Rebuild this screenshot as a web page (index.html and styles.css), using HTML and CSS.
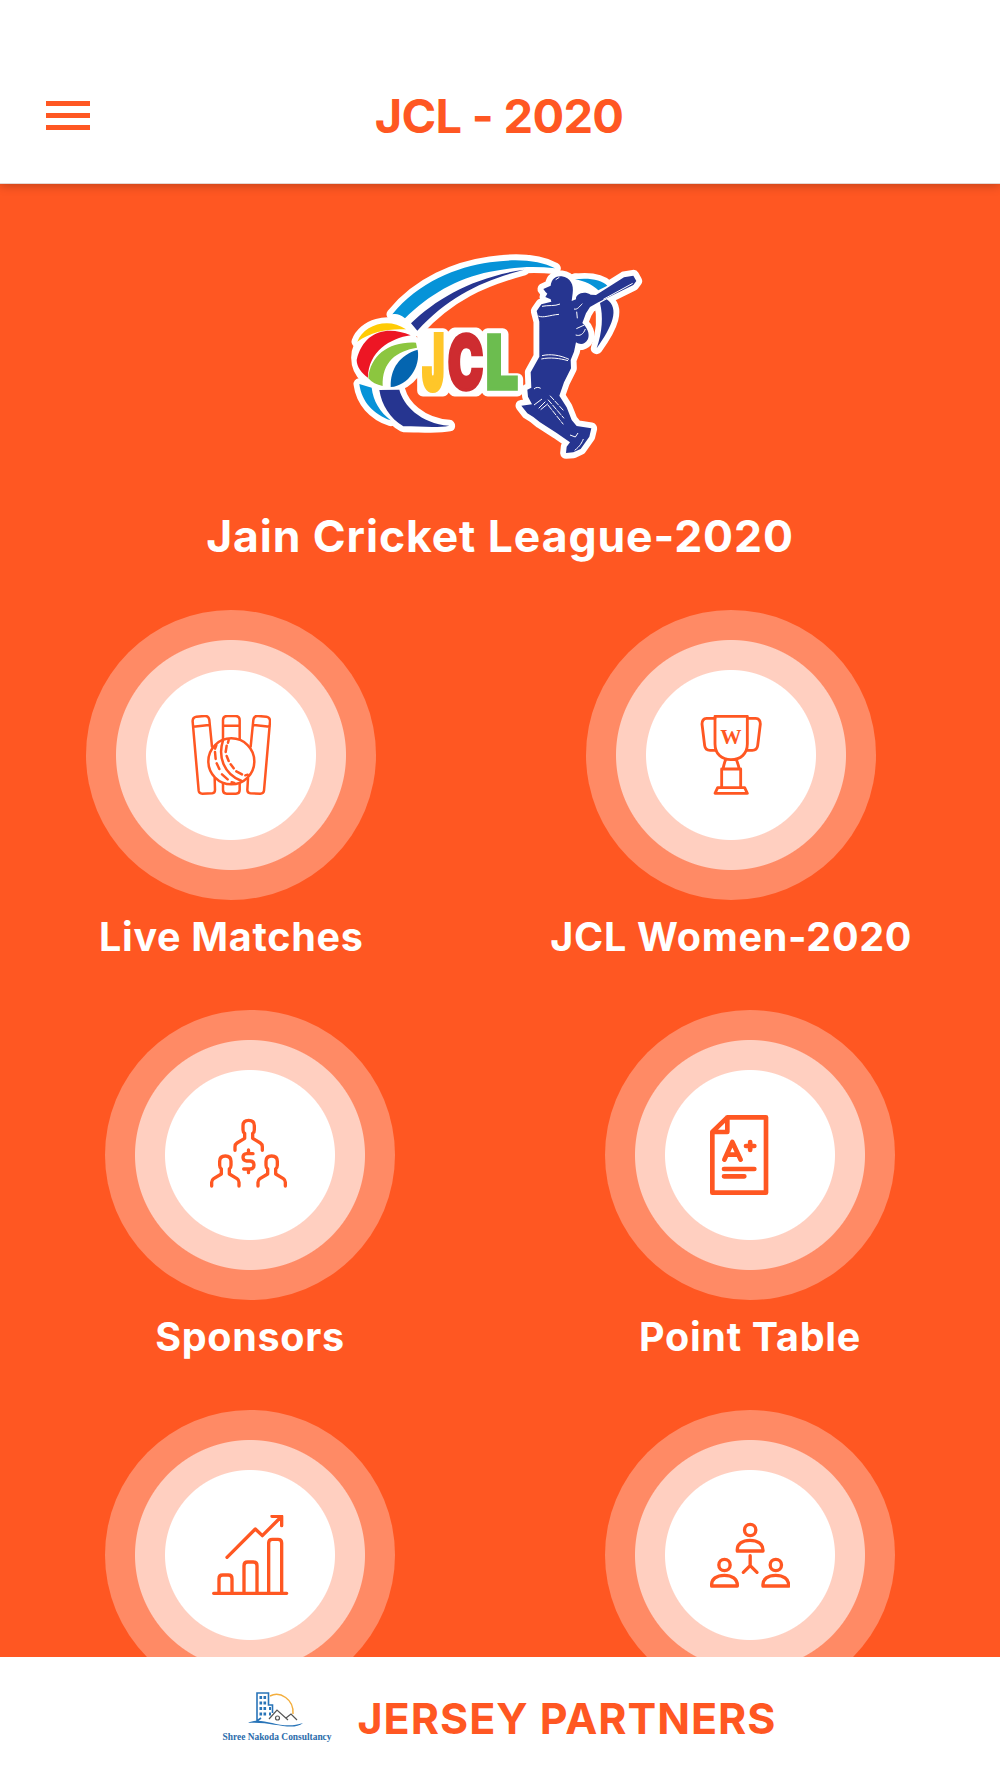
FILE: index.html
```
<!DOCTYPE html>
<html lang="en">

<head>
  <meta charset="UTF-8">
  <title>JCL - 2020</title>
  <link rel="stylesheet" href="styles.css">
</head>

<body>

  <header class="topbar">
    <button class="menu-btn" aria-label="Menu">
      <span></span>
      <span></span>
      <span></span>
    </button>
    <h1>JCL - 2020</h1>
  </header>

  <main>
    <svg class="logo" viewBox="0 0 960 660">
      <defs>
        <g id="swoosh">
          <path fill="#0693d8" d="M157 208C235 112 350 66 450 52C530 40 600 46 645 70C580 62 520 66 450 80C350 100 265 150 195 220C180 208 170 206 157 208Z" />
          <path fill="#263590" d="M213 235C290 160 400 97 552 74C430 107 330 150 232 257Z" />
          <path fill="#0693d8" d="M58 417L95 428C100 470 120 500 152 526C100 508 65 470 58 417Z" />
          <path fill="#263590" d="M118 435L178 434C190 480 240 535 328 542C290 550 240 544 190 544C150 520 125 480 118 435Z" />
        </g>
        <g id="ball">
          <path fill="#ffcb05" d="M52 290C70 240 145 215 198 253C150 250 95 258 52 290Z" />
          <path fill="#ed1624" d="M212 271C150 280 85 320 84 398C65 385 50 365 50 345C70 260 140 240 212 271Z" />
          <path fill="#8cc63f" d="M85 400C90 330 150 288 228 293L231 308C170 318 125 350 128 423C110 420 95 412 85 400Z" />
          <path fill="#0465b0" d="M152 426C150 370 180 330 233 314C242 365 205 422 152 426Z" />
        </g>
        <g id="letters" class="letters">
          <text x="248" y="432" textLength="63" lengthAdjust="spacingAndGlyphs" fill="#ffc629" stroke="#ffc629" stroke-width="18">J</text>
          <text x="323" y="432" textLength="107" lengthAdjust="spacingAndGlyphs" fill="#ce2c30" stroke="#ce2c30" stroke-width="10">C</text>
          <text x="437" y="432" textLength="97" lengthAdjust="spacingAndGlyphs" fill="#6cbd4f" stroke="#6cbd4f" stroke-width="10">L</text>
        </g>
        <g id="batsman">
          <path fill="#0693d8" d="M705 103C750 98 785 105 802 122L775 136C757 119 735 109 705 103Z" />
          <path fill="#263590" d="M780 174L800 163C840 190 817 245 770 310C787 260 790 215 780 174Z" />
          <path fill="#263590" d="M610 132L632 122C634 100 650 92 665 94C692 98 702 120 698 145L695 168L708 163C706 148 730 136 752 149L768 150L852 97L880 92L889 108L880 120L775 172L750 186L738 205L727 234C742 248 750 266 744 282C735 300 720 300 708 292L702 320L692 345L693 370L672 412L658 452L680 487L695 525L710 543L754 550L748 575L722 612L700 622L678 624L680 605L690 592L650 564L600 532L580 516L562 505L544 482L576 478L564 455L562 434L574 428L572 382L598 335L598 230L590 198L604 178L634 170L632 163L616 156L622 146L616 140Z" />
        </g>
      </defs>
      <g class="outline">
        <use href="#swoosh" />
        <use href="#batsman" />
        <ellipse cx="143" cy="338" rx="92" ry="86" />
        <path d="M52 290C70 240 145 215 198 253Z" />
        <path d="M249 267h60v170h-60zM324 285l20-20h65l20 20v130l-20 22h-65l-20-22zM443 267h45v135h44v35h-89z" />
        <path d="M690 110L705 103L802 122L770 150L700 165Z" />
      </g>
      <use href="#swoosh" />
      <use href="#ball" />
      <use href="#letters" />
      <use href="#batsman" />
      <g class="details">
        <path d="M606 332C630 326 660 330 687 343M604 342C630 336 660 340 684 347" />
        <path d="M606 184C625 180 645 184 660 177M595 213C610 220 630 210 657 208" />
        <path d="M582 480L606 462M596 490L616 470M602 494L624 476M582 432C588 426 595 426 602 430" />
        <path d="M630 452L670 496M624 464L672 520M624 480L670 538" stroke-dasharray="18 3" />
        <path d="M702 192C712 195 718 185 727 176M710 200L712 220M709 251L733 240M707 270C720 274 730 268 736 252" />
        <path d="M690 570L706 576L714 564M704 616C720 604 726 592 730 582M790 163L878 115M647 104L658 97" />
      </g>
    </svg>

    <h2>Jain Cricket League-2020</h2>

    <div class="menu">
      <a class="item shifted">
        <div class="circle">
          <svg class="icon" viewBox="334 345 240 240" stroke-width="7.500">
            <path d="M397 440L389 360Q387 347 375 348L350 350Q338 352 339 365L357 572Q358 581 368 581L398 580Q406 579 406 570L405 535M341 380L388 375" />
            <path d="M430 418V361Q430 348 443 348H467Q480 348 480 361V418M430 377H480M430 550V570Q430 581 441 581H469Q480 581 480 570V550" />
            <path d="M513 440L521 360Q523 347 535 348L560 350Q572 352 571 365L553 572Q552 581 542 581L512 580Q503 579 503 570L505 535M523 375L570 380" />
            <circle cx="455" cy="484" r="69" />
            <path d="M430 421C414 470 432 522 486 543" />
            <path d="M447 420L445 428M441 437L438 456M441 468L447 483M453 493L462 505M470 514L487 523M497 526L504 524M410 436L406 446M406 456L408 477M411 490L419 507M427 523L444 538M456 547L464 549" />
          </svg>
        </div>
        <span class="label">Live Matches</span>
      </a>

      <a class="item shifted">
        <div class="circle">
          <svg class="icon" viewBox="124 105 240 240" stroke-width="8.500">
            <path d="M196 109H293V192C293 222 272 239 244 239S196 222 196 192Z" />
            <path d="M196 115H171Q157 116 157 132L165 197Q167 211 181 211H199M293 115H318Q332 116 332 132L324 197Q322 211 308 211H290" />
            <path d="M228 239Q223 251 220 267M260 239Q265 251 269 267M216 267H273V323H216ZM204 323H285L293 340H196Z" />
            <text class="cup-letter" x="212" y="192" textLength="64" lengthAdjust="spacingAndGlyphs">W</text>
          </svg>
        </div>
        <span class="label">JCL Women-2020</span>
      </a>

      <a class="item">
        <div class="circle">
          <svg class="icon" viewBox="120 75 240 240" stroke-width="10">
            <path id="person" d="M195 181V170Q195 163 201 159L224 145V130Q219 127 219 119V107Q219 91 236 91T253 107V119Q253 127 248 130V145L271 159Q277 163 277 170V181" />
            <use href="#person" x="-70" y="107" />
            <use href="#person" x="69" y="107" />
            <path d="M249 191H230Q219 192 219 202T230 213H241Q252 214 252 225T241 237H221M235.500 180V190M235.500 238V248" />
          </svg>
        </div>
        <span class="label">Sponsors</span>
      </a>

      <a class="item">
        <div class="circle">
          <svg class="icon" viewBox="120 75 240 240" stroke-width="14">
            <path d="M127 126L172 82H288V308H127ZM127 126H172V82" />
            <path d="M163 209L187 156L212 209M173 194H202M228 168H253M240.500 156V180M162 237H253M162 259H223" />
          </svg>
        </div>
        <span class="label">Point Table</span>
      </a>

      <a class="item">
        <div class="circle">
          <svg class="icon" viewBox="120 75 240 240" stroke-width="10">
            <path d="M131 310H350M147 308V266Q147 255 158 255H175Q186 255 186 266V308M222 308V227Q222 216 233 216H250Q261 216 261 227V308M296 308V159Q296 148 307 148H324Q335 148 335 159V308" />
            <path d="M171 202L256 117L277 137L333 81M306 79H335V107" />
          </svg>
        </div>
      </a>

      <a class="item">
        <div class="circle">
          <svg class="icon" viewBox="120 75 240 240" stroke-width="10">
            <g id="member">
              <circle cx="240.500" cy="120" r="17" />
              <path d="M202 183C200 161 218 151 240 151S280 161 279 183Z" />
            </g>
            <use href="#member" x="-77" y="105" />
            <use href="#member" x="77" y="105" />
            <path d="M240.500 197V227L220 247M240.500 227L261 247" />
          </svg>
        </div>
      </a>
    </div>
  </main>

  <footer class="partners">
    <svg class="sponsor" viewBox="0 0 112 56">
      <path d="M49 6C59 1 73 9 72 24" fill="none" stroke="#f3ae3d" stroke-width="1.500" />
      <path d="M36 31V3H47.500V15H51.500V23M36 31L40 28" fill="none" stroke="#2874b8" stroke-width="1.600" />
      <path d="M38.500 7.500H45.500M38.500 13H45.500M38.500 18.500H45.500M38.500 24H45.500M48 18.500H50M48 24H50" fill="none" stroke="#2874b8" stroke-width="2.800" stroke-dasharray="2.600 1.400" />
      <path d="M27 33C41 25 59 41 82 33C71 42 51 31 27 33Z" fill="#2874b8" />
      <path d="M48 29L56 20L67 30M65 28L70 24L76 30" fill="none" stroke="#555" stroke-width="1.200" />
      <circle cx="56.500" cy="28" r="2" fill="none" stroke="#555" stroke-width="1.200" />
      <text x="1.500" y="50" textLength="109" lengthAdjust="spacingAndGlyphs">Shree Nakoda Consultancy</text>
    </svg>
    <h3>JERSEY PARTNERS</h3>
  </footer>

</body>

</html>
```
FILE: styles.css
```
* {
  box-sizing: border-box;
}

body {
  margin: 0;
  height: 1778px;
  display: flex;
  flex-direction: column;
  overflow: hidden;
  background: #ff5722;
  font-family: Inter, "Liberation Sans", sans-serif;
}

h1,
h2,
h3 {
  margin: 0;
  white-space: nowrap;
}

.topbar {
  flex: none;
  height: 184px;
  padding: 48px 48px 0 46px;
  display: grid;
  grid-template-columns: 44px 1fr 44px;
  align-items: center;
  background: #fff;
  color: #ff5722;
  border-bottom: 1px solid #e4d8d4;
  box-shadow: 0 1px 10px rgba(0, 0, 0, 0.27);
  z-index: 1;
}

.topbar h1 {
  font-size: 47px;
  font-weight: 700;
  letter-spacing: -0.7px;
  text-align: center;
}

.menu-btn {
  display: flex;
  flex-direction: column;
  gap: 7px;
  padding: 0;
  border: none;
  background: none;
}

.menu-btn span {
  height: 5px;
  background: #ff5722;
}

main {
  flex: 1;
  min-height: 0;
  overflow: hidden;
  display: flex;
  flex-direction: column;
  align-items: center;
  padding-top: 61px;
  color: #fff;
}

.logo {
  flex: none;
  width: 320px;
  height: 220px;
}

.letters {
  font-family: Inter, sans-serif;
  font-weight: 900;
  font-size: 221px;
}

.outline {
  fill: #fff;
  stroke: #fff;
  stroke-width: 35px;
  stroke-linejoin: round;
}

.details {
  fill: none;
  stroke: #fff;
  stroke-width: 3px;
}

h2 {
  margin: 44px 0 47px;
  font-size: 44.500px;
  line-height: 54px;
  font-weight: 700;
  letter-spacing: 0.9px;
}

.menu {
  width: 100%;
  display: grid;
  grid-template-columns: 1fr 1fr;
  grid-auto-rows: 400px;
}

.item {
  display: flex;
  flex-direction: column;
  align-items: center;
}

.shifted {
  padding-right: 37.500px;
}

.circle {
  width: 290px;
  height: 290px;
  flex: none;
  display: flex;
  align-items: center;
  justify-content: center;
  border-radius: 50%;
  background: radial-gradient(circle, #fff 84.500px, #ffcfc0 85.500px, #ffcfc0 114.500px, #ff8a65 115.500px);
}

.icon {
  width: 80px;
  height: 80px;
  fill: none;
  stroke: #ff5722;
  stroke-linecap: round;
  stroke-linejoin: round;
}

.cup-letter {
  font: bold 62px "Liberation Serif", serif;
  fill: #ff5722;
  stroke: none;
}

.label {
  margin-top: 13px;
  font-size: 39.500px;
  line-height: 48px;
  font-weight: 700;
  letter-spacing: 0.7px;
  white-space: nowrap;
}

.partners {
  flex: none;
  height: 121px;
  padding-right: 2px;
  display: flex;
  align-items: center;
  justify-content: center;
  gap: 24px;
  background: #fff;
  color: #ff5722;
}

.partners h3 {
  font-size: 43px;
  font-weight: 700;
  letter-spacing: 1px;
}

.sponsor {
  width: 112px;
  height: 56px;
  overflow: visible;
}

.sponsor text {
  font: bold 10.500px "Liberation Serif", serif;
  fill: #2b6cab;
}
```
